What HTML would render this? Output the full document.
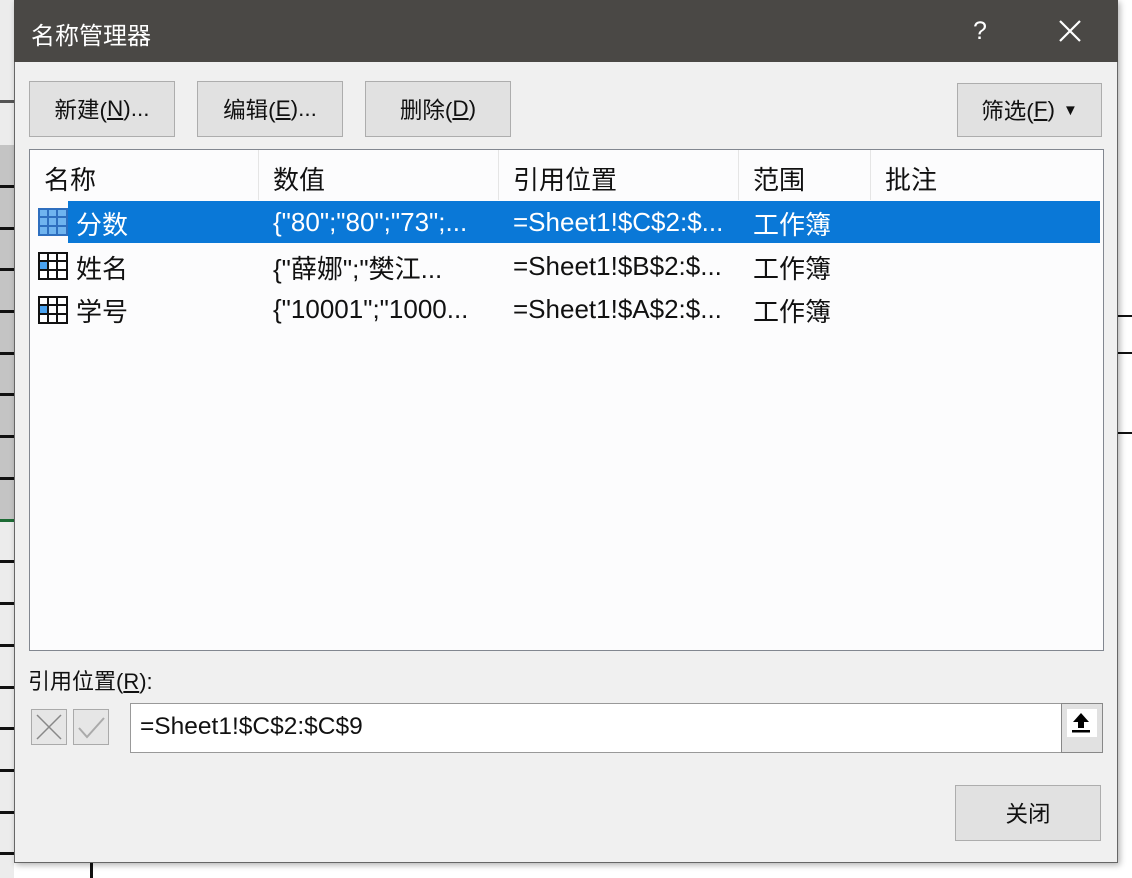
<!DOCTYPE html>
<html><head><meta charset="utf-8"><style>
*{margin:0;padding:0;box-sizing:border-box}
body{width:1132px;height:878px;overflow:hidden;background:#fff;position:relative;font-family:"Liberation Sans","Noto Sans CJK SC",sans-serif;color:#111}
.a{position:absolute}
.btn{position:absolute;background:#e1e1e1;border:1px solid #adadad;font-size:22.5px;display:flex;align-items:center;justify-content:center}
.t{position:absolute;font-size:26px;white-space:nowrap}
.g{position:absolute;left:0;width:14px;height:3px;background:#111}
</style></head><body>
<!-- background grid -->
<div class="a" style="left:0;top:0;width:14px;height:878px;background:#ececec"></div>
<div class="a" style="left:0;top:145px;width:14px;height:375px;background:#c4c4c4"></div>
<div class="g" style="top:100px;background:#555"></div>
<div class="g" style="top:185px"></div>
<div class="g" style="top:227px"></div>
<div class="g" style="top:268px"></div>
<div class="g" style="top:310px"></div>
<div class="g" style="top:352px"></div>
<div class="g" style="top:393px"></div>
<div class="g" style="top:435px"></div>
<div class="g" style="top:477px"></div>
<div class="g" style="top:519px;background:#1d6b35"></div>
<div class="g" style="top:560px"></div>
<div class="g" style="top:602px"></div>
<div class="g" style="top:644px"></div>
<div class="g" style="top:686px"></div>
<div class="g" style="top:727px"></div>
<div class="g" style="top:769px"></div>
<div class="g" style="top:811px"></div>
<div class="g" style="top:852px"></div>
<div class="a" style="left:90px;top:862px;width:3px;height:16px;background:#111"></div>
<div class="a" style="left:1117px;top:315px;width:15px;height:2px;background:#111"></div>
<div class="a" style="left:1117px;top:352px;width:15px;height:2px;background:#111"></div>
<div class="a" style="left:1117px;top:432px;width:15px;height:2px;background:#111"></div>
<!-- dialog -->
<div class="a" style="left:14px;top:0;width:1104px;height:863px;background:#f0f0f0;border:1px solid #666;border-top:none;box-shadow:2px 2px 6px rgba(0,0,0,.3)"></div>
<div class="a" style="left:14px;top:0;width:1104px;height:62px;background:#4a4845"></div>
<div class="a" style="left:31px;top:16px;color:#fff;font-size:24px">名称管理器</div>
<div class="a" style="left:973px;top:17px;color:#fff;font-size:25px">?</div>
<svg class="a" style="left:1058px;top:19px" width="24" height="24"><path d="M2 2L22 22M22 2L2 22" stroke="#fff" stroke-width="2.2"/></svg>
<div class="btn" style="left:29px;top:81px;width:146px;height:56px">新建(<u>N</u>)...</div>
<div class="btn" style="left:197px;top:81px;width:146px;height:56px">编辑(<u>E</u>)...</div>
<div class="btn" style="left:365px;top:81px;width:146px;height:56px">删除(<u>D</u>)</div>
<div class="btn" style="left:957px;top:83px;width:145px;height:54px">筛选(<u>F</u>) <span style="font-size:15px;margin-left:8px">▼</span></div>
<!-- list -->
<div class="a" style="left:29px;top:149px;width:1075px;height:502px;background:#fcfcfd;border:1px solid #828790"></div>
<div class="a" style="left:258px;top:150px;width:1px;height:50px;background:#e5e5e5"></div>
<div class="a" style="left:498px;top:150px;width:1px;height:50px;background:#e5e5e5"></div>
<div class="a" style="left:738px;top:150px;width:1px;height:50px;background:#e5e5e5"></div>
<div class="a" style="left:870px;top:150px;width:1px;height:50px;background:#e5e5e5"></div>
<div class="t" style="left:44px;top:160px">名称</div>
<div class="t" style="left:273px;top:160px">数值</div>
<div class="t" style="left:513px;top:160px">引用位置</div>
<div class="t" style="left:753px;top:160px">范围</div>
<div class="t" style="left:885px;top:160px">批注</div>
<div class="a" style="left:68px;top:201px;width:1032px;height:42px;background:#0a78d7"></div>
<svg class="a" style="left:38px;top:208px" width="30" height="28"><rect x="1" y="1" width="28" height="26" fill="#6fb4ef" stroke="#2e6fbf" stroke-width="2"/><path d="M1 9H29M1 18H29M10 1V27M19 1V27" stroke="#2e6fbf" stroke-width="2"/></svg>
<svg class="a" style="left:38px;top:252px" width="30" height="28"><rect x="1" y="1" width="28" height="26" fill="#fff" stroke="#111" stroke-width="2"/><rect x="2" y="10" width="8" height="8" fill="#4aa3f0"/><path d="M1 9H29M1 18H29M10 1V27M19 1V27" stroke="#111" stroke-width="2"/></svg>
<svg class="a" style="left:38px;top:296px" width="30" height="28"><rect x="1" y="1" width="28" height="26" fill="#fff" stroke="#111" stroke-width="2"/><rect x="2" y="10" width="8" height="8" fill="#4aa3f0"/><path d="M1 9H29M1 18H29M10 1V27M19 1V27" stroke="#111" stroke-width="2"/></svg>
<div class="t" style="left:76px;top:205px;color:#fff">分数</div>
<div class="t" style="left:273px;top:207px;color:#fff">{"80";"80";"73";...</div>
<div class="t" style="left:513px;top:207px;color:#fff">=Sheet1!$C$2:$...</div>
<div class="t" style="left:753px;top:205px;color:#fff">工作簿</div>
<div class="t" style="left:76px;top:249px">姓名</div>
<div class="t" style="left:273px;top:249px">{"薛娜";"樊江...</div>
<div class="t" style="left:513px;top:251px">=Sheet1!$B$2:$...</div>
<div class="t" style="left:753px;top:249px">工作簿</div>
<div class="t" style="left:76px;top:292px">学号</div>
<div class="t" style="left:273px;top:294px">{"10001";"1000...</div>
<div class="t" style="left:513px;top:294px">=Sheet1!$A$2:$...</div>
<div class="t" style="left:753px;top:292px">工作簿</div>
<!-- bottom -->
<div class="a" style="left:28px;top:664px;font-size:22px">引用位置(<u>R</u>):</div>
<div class="a" style="left:31px;top:709px;width:36px;height:36px;background:#e6e6e6;border:1px solid #aaa"></div>
<svg class="a" style="left:31px;top:709px" width="36" height="36"><path d="M6 6L30 30M30 6L6 30" stroke="#888" stroke-width="1.5"/></svg>
<div class="a" style="left:73px;top:709px;width:36px;height:36px;background:#e6e6e6;border:1px solid #aaa"></div>
<svg class="a" style="left:73px;top:709px" width="36" height="36"><path d="M6 19L14 28L31 9" stroke="#aaa" stroke-width="2" fill="none"/></svg>
<div class="a" style="left:130px;top:703px;width:932px;height:50px;background:#fff;border:1px solid #999"></div>
<div class="a" style="left:140px;top:713px;font-size:24.5px">=Sheet1!$C$2:$C$9</div>
<div class="a" style="left:1061px;top:703px;width:42px;height:50px;background:#e1e1e1;border:1px solid #888"></div>
<div class="a" style="left:1067px;top:709px;width:30px;height:28px;background:#fff"></div>
<svg class="a" style="left:1070px;top:710px" width="22" height="24"><path d="M11 3L3 12H8V18H14V12H19Z" fill="#000"/><rect x="2" y="20" width="18" height="2.5" fill="#000"/></svg>
<div class="btn" style="left:955px;top:785px;width:146px;height:56px">关闭</div>
</body></html>
